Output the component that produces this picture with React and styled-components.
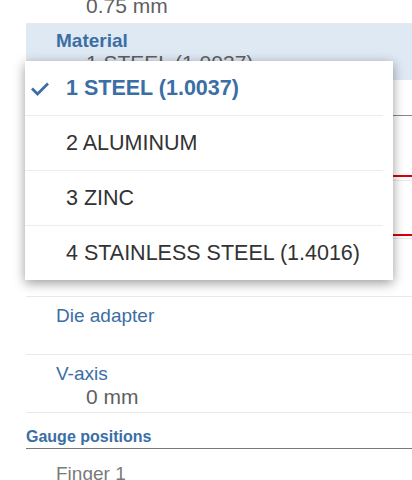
import React from "react";
import styled, { createGlobalStyle } from "styled-components";

const GlobalStyle = createGlobalStyle`
  html, body {
    margin: 0;
    padding: 0;
    background: #ffffff;
    overflow: hidden;
  }
  body {
    font-family: "Liberation Sans", Arial, sans-serif;
  }
`;

const Screen = styled.div`
  position: relative;
  width: 412px;
  height: 480px;
  overflow: hidden;
`;

const List = styled.div`
  margin-top: -36px;
  padding-left: 26px;
`;

const Row = styled.div`
  box-sizing: border-box;
  height: ${(p) => p.$height || 58}px;
  padding: 7px 0 0 30px;
  border-bottom: 1px solid ${(p) => p.$line || "#e9e9e9"};
  background: ${(p) => (p.$selected ? "#dfe9f4" : "transparent")};
`;

const Label = styled.div`
  min-height: ${(p) => p.$lh || 23}px;
  font-size: 19px;
  line-height: ${(p) => p.$lh || 23}px;
  color: #3a6ea5;
  font-weight: ${(p) => (p.$bold ? 700 : 400)};
`;

const Value = styled.div`
  font-size: 21px;
  line-height: 23px;
  min-height: 23px;
  padding-left: 30px;
  color: #5f5f5f;
  white-space: nowrap;
`;

const Underline = styled.div`
  margin-top: ${(p) => p.$offset}px;
  margin-left: 30px;
  border-bottom: 2px solid #d8000c;
`;

const SectionHeader = styled.div`
  box-sizing: border-box;
  height: 36px;
  padding-top: 15px;
  font-size: 16px;
  line-height: 18px;
  font-weight: 700;
  color: #3a6ea5;
  border-bottom: 1px solid #7a7a7a;
`;

const GaugeLabel = styled.div`
  padding: 13px 0 0 30px;
  font-size: 19px;
  line-height: 23px;
  color: #7a7a7a;
`;

const Popup = styled.div`
  position: absolute;
  left: 25px;
  top: 61px;
  width: 368px;
  background: #ffffff;
  box-shadow: 0 3px 11px rgba(0, 0, 0, 0.4);
`;

const Option = styled.div`
  position: relative;
  display: flex;
  align-items: center;
  height: 54px;
  padding-left: 41px;
  font-size: 21.5px;
  color: ${(p) => (p.$active ? "#3a6ea5" : "#333333")};
  font-weight: ${(p) => (p.$active ? 700 : 400)};
  white-space: nowrap;

  & + & {
    border-top: 1px solid #ececec;
    margin-right: 10px;
  }
`;

const Check = styled.svg`
  position: absolute;
  left: 5px;
  top: 21px;
`;

const options = [
  "1 STEEL (1.0037)",
  "2 ALUMINUM",
  "3 ZINC",
  "4 STAINLESS STEEL (1.4016)",
];

export default function App() {
  return (
    <Screen>
      <GlobalStyle />
      <List>
        <Row $height={60}>
          <Label />
          <Value>0.75 mm</Value>
        </Row>
        <Row $selected $height={56} $line="transparent">
          <Label $bold $lh={20}>Material</Label>
          <Value>1 STEEL (1.0037)</Value>
        </Row>
        <Row $height={36} $line="#888888" />
        <Row $height={65}>
          <Underline $offset={52} />
        </Row>
        <Row $height={58}>
          <Underline $offset={46} />
        </Row>
        <Row $height={58} />
        <Row>
          <Label>Die adapter</Label>
          <Value />
        </Row>
        <Row>
          <Label>V-axis</Label>
          <Value>0 mm</Value>
        </Row>
        <SectionHeader>Gauge positions</SectionHeader>
        <GaugeLabel>Finger 1</GaugeLabel>
      </List>

      <Popup>
        {options.map((o, i) => (
          <Option key={o} $active={i === 0}>
            {i === 0 && (
              <Check width="20" height="14" viewBox="0 0 20 14">
                <path
                  d="M2 6.5 L7.5 12 L18 1.5"
                  fill="none"
                  stroke="#3a6ea5"
                  strokeWidth="2.8"
                />
              </Check>
            )}
            {o}
          </Option>
        ))}
      </Popup>
    </Screen>
  );
}
